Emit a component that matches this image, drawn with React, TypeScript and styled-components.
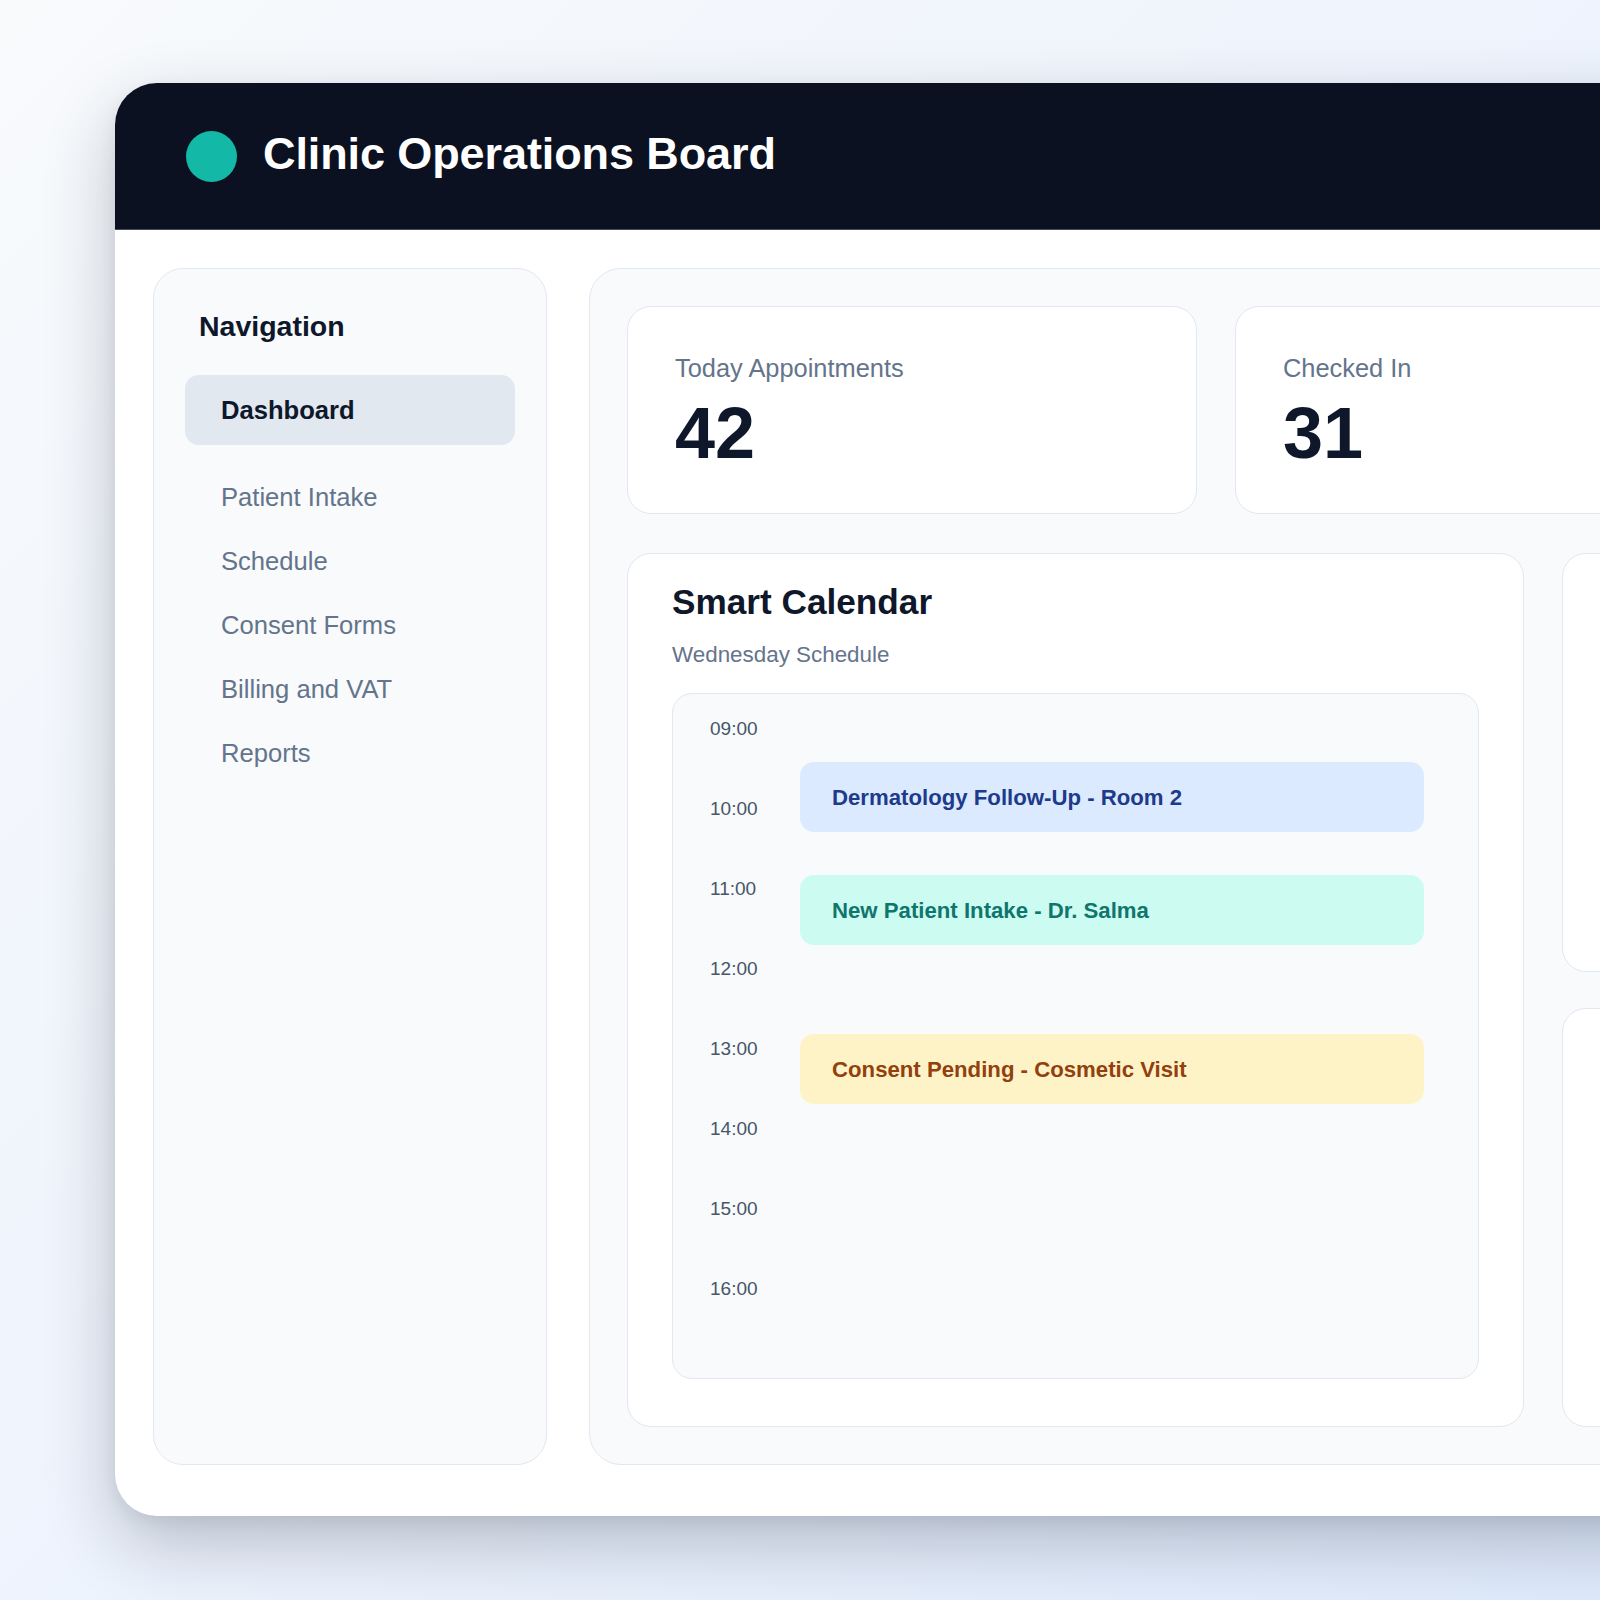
import React from 'react';
import styled, { createGlobalStyle } from 'styled-components';

const GlobalStyle = createGlobalStyle`
  *, *::before, *::after {
    box-sizing: border-box;
  }
  html, body {
    margin: 0;
    padding: 0;
    overflow: hidden;
  }
  body {
    font-family: "Liberation Sans", Arial, sans-serif;
    color: #0f172a;
  }
`;

const Page = styled.div`
  width: 100vw;
  height: 100vh;
  overflow: hidden;
  padding: 83px 0 0 115px;
  background: linear-gradient(135deg, #f8fafc 0%, #edf3fd 55%, #dfeafb 100%);
`;

const Board = styled.div`
  width: max-content;
  height: 1433px;
  display: flex;
  flex-direction: column;
  background: #ffffff;
  border-radius: 42px;
  overflow: hidden;
  box-shadow: 0 28px 70px rgba(15, 23, 42, 0.24), 0 6px 18px rgba(15, 23, 42, 0.06);
`;

const Header = styled.header`
  height: 147px;
  flex-shrink: 0;
  display: flex;
  align-items: center;
  gap: 26px;
  padding: 0 71px;
  background: #0b1120;
  border-bottom: 1px solid #444b5c;
`;

const Dot = styled.span`
  width: 51px;
  height: 51px;
  border-radius: 50%;
  background: #14b8a6;
`;

const Title = styled.h1`
  margin: 0;
  padding-bottom: 5px;
  font-size: 45px;
  font-weight: 700;
  color: #ffffff;
  letter-spacing: -0.1px;
`;

const Body = styled.div`
  flex: 1;
  display: grid;
  grid-template-columns: 394px auto;
  gap: 42px;
  padding: 38px 38px 51px;
`;

const Sidebar = styled.nav`
  background: #f8fafc;
  border: 1.5px solid #e2e8f0;
  border-radius: 30px;
  padding: 31px 31px;
  display: flex;
  flex-direction: column;
`;

const SideHeading = styled.h2`
  margin: 0 0 33px;
  padding: 10px 14px 0;
  font-size: 28.5px;
  line-height: 32px;
  font-weight: 700;
  color: #0f172a;
`;

const NavItem = styled.div<{ $active?: boolean }>`
  height: ${(p) => (p.$active ? '70px' : '64px')};
  margin-bottom: ${(p) => (p.$active ? '20px' : '0')};
  display: flex;
  align-items: center;
  padding: 0 36px;
  border-radius: 14px;
  font-size: 25.6px;
  font-weight: ${(p) => (p.$active ? 700 : 400)};
  color: ${(p) => (p.$active ? '#0f172a' : '#64748b')};
  background: ${(p) => (p.$active ? '#e2e8f0' : 'transparent')};
`;

const Main = styled.main`
  background: #f8fafc;
  border: 1.5px solid #e2e8f0;
  border-radius: 32px;
  padding: 37px;
  display: grid;
  grid-template-rows: auto 1fr;
  gap: 39px;
`;

const StatRow = styled.div`
  display: grid;
  grid-template-columns: repeat(3, 570px);
  gap: 38px;
`;

const Card = styled.section`
  background: #ffffff;
  border: 1.5px solid #e2e8f0;
  border-radius: 24px;
`;

const StatCard = styled(Card)`
  height: 208px;
  padding: 47px 47px;
`;

const StatLabel = styled.div`
  font-size: 25.4px;
  line-height: 29px;
  color: #64748b;
`;

const StatValue = styled.div`
  margin-top: 14px;
  font-size: 72px;
  line-height: 72px;
  font-weight: 700;
  color: #0f172a;
`;

const LowerRow = styled.div`
  display: grid;
  grid-template-columns: 897px 851px;
  gap: 38px;
`;

const CalendarCard = styled(Card)`
  display: flex;
  flex-direction: column;
  padding: 28px 44px 47px;
`;

const CardTitle = styled.h3`
  margin: 0;
  font-size: 35.2px;
  line-height: 40px;
  font-weight: 700;
  color: #0f172a;
`;

const CardSubtitle = styled.div`
  margin-top: 20px;
  font-size: 22.4px;
  line-height: 25px;
  color: #64748b;
`;

const Timeline = styled.div`
  position: relative;
  flex: 1;
  margin-top: 26px;
  padding: 24px 0 0 37px;
  background: #f8fafc;
  border: 1.5px solid #e2e8f0;
  border-radius: 20px;
`;

const TimeSlot = styled.div`
  height: 80px;
  font-size: 19px;
  line-height: 22px;
  color: #475569;
`;

const tones = {
  blue: { bg: '#dbeafe', fg: '#1e3a8a' },
  teal: { bg: '#ccfbf1', fg: '#0f766e' },
  amber: { bg: '#fef3c7', fg: '#92400e' },
};

type Tone = keyof typeof tones;

const Event = styled.div<{ $top: number; $tone: Tone }>`
  position: absolute;
  top: ${(p) => p.$top}px;
  left: 127px;
  right: 54px;
  height: 70px;
  display: flex;
  align-items: center;
  padding: 2px 32px 0;
  border-radius: 14px;
  font-size: 22.2px;
  font-weight: 700;
  background: ${(p) => tones[p.$tone].bg};
  color: ${(p) => tones[p.$tone].fg};
`;

const SideColumn = styled.div`
  display: grid;
  grid-template-rows: 1fr 1fr;
  gap: 36px;
`;

const SideCard = styled(Card)`
  padding: 28px 44px;
`;

const navItems = ['Dashboard', 'Patient Intake', 'Schedule', 'Consent Forms', 'Billing and VAT', 'Reports'];

const stats = [
  { label: 'Today Appointments', value: '42' },
  { label: 'Checked In', value: '31' },
  { label: 'Pending Consent', value: '6' },
];

const hours = ['09:00', '10:00', '11:00', '12:00', '13:00', '14:00', '15:00', '16:00'];

const events: { label: string; top: number; tone: Tone }[] = [
  { label: 'Dermatology Follow-Up - Room 2', top: 68, tone: 'blue' },
  { label: 'New Patient Intake - Dr. Salma', top: 180.5, tone: 'teal' },
  { label: 'Consent Pending - Cosmetic Visit', top: 340, tone: 'amber' },
];

const App: React.FunctionComponent = () => {
  return (
    <>
      <GlobalStyle />
      <Page>
        <Board>
          <Header>
            <Dot />
            <Title>Clinic Operations Board</Title>
          </Header>
          <Body>
            <Sidebar>
              <SideHeading>Navigation</SideHeading>
              {navItems.map((item, i) => (
                <NavItem key={item} $active={i === 0}>
                  {item}
                </NavItem>
              ))}
            </Sidebar>
            <Main>
              <StatRow>
                {stats.map((s) => (
                  <StatCard key={s.label}>
                    <StatLabel>{s.label}</StatLabel>
                    <StatValue>{s.value}</StatValue>
                  </StatCard>
                ))}
              </StatRow>
              <LowerRow>
                <CalendarCard>
                  <CardTitle>Smart Calendar</CardTitle>
                  <CardSubtitle>Wednesday Schedule</CardSubtitle>
                  <Timeline>
                    {hours.map((h) => (
                      <TimeSlot key={h}>{h}</TimeSlot>
                    ))}
                    {events.map((e) => (
                      <Event key={e.label} $top={e.top} $tone={e.tone}>
                        {e.label}
                      </Event>
                    ))}
                  </Timeline>
                </CalendarCard>
                <SideColumn>
                  <SideCard>
                    <CardTitle>Waiting Room</CardTitle>
                  </SideCard>
                  <SideCard>
                    <CardTitle>Billing Summary</CardTitle>
                  </SideCard>
                </SideColumn>
              </LowerRow>
            </Main>
          </Body>
        </Board>
      </Page>
    </>
  );
};

export default App;
